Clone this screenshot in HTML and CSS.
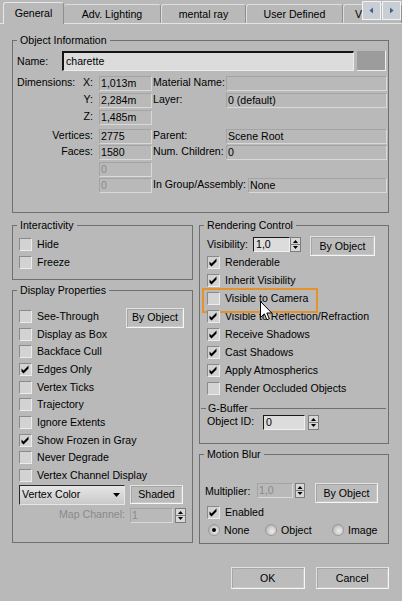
FILE: index.html
```html
<!DOCTYPE html>
<html>
<head>
<meta charset="utf-8">
<link rel="stylesheet" href="styles.css">
</head>
<body>
<div class="dialog">
  <div class="tabbar">
    <div class="tab active t-gen">General</div>
    <div class="tab t-adv">Adv. Lighting</div>
    <div class="tab t-mr">mental ray</div>
    <div class="tab t-ud">User Defined</div>
    <div class="tab t-v">V</div>
    <div class="tabscroll">
      <span class="sbtn"><svg width="5" height="7" viewBox="0 0 5 7"><path d="M4 0.5V6.5L0.5 3.5Z" fill="#3f5f93"/></svg></span>
      <span class="sbtn"><svg width="5" height="7" viewBox="0 0 5 7"><path d="M1 0.5V6.5L4.5 3.5Z" fill="#3f5f93"/></svg></span>
    </div>
  </div>

  <div class="page">
    <fieldset class="grp objinfo">
      <legend>Object Information</legend>
      <div class="namerow">
        <span class="name-lbl">Name:</span>
        <div class="edit name-edit">charette</div>
        <div class="swatch"></div>
      </div>
      <div class="infogrid">
        <div class="c1 split"><span>Dimensions:</span><span>X:</span></div>
        <div class="field">1,013m</div>
        <div class="c3">Material Name:</div>
        <div class="field wide"></div>

        <div class="c1">Y:</div>
        <div class="field">2,284m</div>
        <div class="c3">Layer:</div>
        <div class="field wide">0 (default)</div>

        <div class="c1">Z:</div>
        <div class="field">1,485m</div>
        <div class="c3"></div>
        <div></div>

        <div class="c1">Vertices:</div>
        <div class="field">2775</div>
        <div class="c3">Parent:</div>
        <div class="field wide">Scene Root</div>

        <div class="c1">Faces:</div>
        <div class="field">1580</div>
        <div class="c3">Num. Children:</div>
        <div class="field wide">0</div>

        <div class="c1"></div>
        <div class="field dis">0</div>
        <div class="c3"></div>
        <div></div>

        <div class="c1"></div>
        <div class="field dis">0</div>
        <div class="grp-asm"><span>In Group/Assembly:</span><div class="field asm">None</div></div>
      </div>
    </fieldset>

    <div class="cols">
      <div class="col">
        <fieldset class="grp interact">
          <legend>Interactivity</legend>
          <div class="chklist left">
            <div class="chk"><span class="box"></span><span>Hide</span></div>
            <div class="chk"><span class="box"></span><span>Freeze</span></div>
          </div>
        </fieldset>

        <fieldset class="grp display">
          <legend>Display Properties</legend>
          <div class="dispgrid">
            <div class="chk"><span class="box"></span><span>See-Through</span></div>
            <button class="btn byobj-d">By Object</button>
            <div class="chk"><span class="box"></span><span>Display as Box</span></div>
            <div class="chk"><span class="box"></span><span>Backface Cull</span></div>
            <div class="chk"><span class="box"><svg class="tick" width="11" height="11" viewBox="0 0 11 11"><path d="M1.5 4.5L3.5 6.5L8.5 1.5V4.5L3.5 9.5L1.5 7.5Z"/></svg></span><span>Edges Only</span></div>
            <div class="chk"><span class="box"></span><span>Vertex Ticks</span></div>
            <div class="chk"><span class="box"></span><span>Trajectory</span></div>
            <div class="chk"><span class="box"></span><span>Ignore Extents</span></div>
            <div class="chk"><span class="box"><svg class="tick" width="11" height="11" viewBox="0 0 11 11"><path d="M1.5 4.5L3.5 6.5L8.5 1.5V4.5L3.5 9.5L1.5 7.5Z"/></svg></span><span>Show Frozen in Gray</span></div>
            <div class="chk"><span class="box"></span><span>Never Degrade</span></div>
            <div class="chk"><span class="box"></span><span>Vertex Channel Display</span></div>
          </div>
          <div class="dd-row">
            <div class="dropdown"><span>Vertex Color</span><svg width="7" height="4" viewBox="0 0 7 4"><path d="M0 0H7L3.5 4Z"/></svg></div>
            <button class="btn shaded">Shaded</button>
          </div>
          <div class="mc-row">
            <span class="mc-lbl">Map Channel:</span>
            <div class="field mc dis">1</div>
            <svg class="spin" width="11" height="15" viewBox="0 0 11 15"><rect x="0.5" y="0.5" width="10" height="14" fill="#d8d8d8" stroke="#7c7c7c"/><path d="M0.5 7.5H10.5" stroke="#7c7c7c"/><path d="M3 6H8L5.5 3Z"/><path d="M3 9H8L5.5 12Z"/></svg>
          </div>
        </fieldset>
      </div>

      <div class="col">
        <fieldset class="grp render">
          <legend>Rendering Control</legend>
          <div class="vis-row">
            <span class="vis-lbl">Visibility:</span>
            <div class="edit vis-edit">1,0</div>
            <svg class="spin" width="11" height="15" viewBox="0 0 11 15"><rect x="0.5" y="0.5" width="10" height="14" fill="#d8d8d8" stroke="#7c7c7c"/><path d="M0.5 7.5H10.5" stroke="#7c7c7c"/><path d="M3 6H8L5.5 3Z"/><path d="M3 9H8L5.5 12Z"/></svg>
            <button class="btn byobj-r">By Object</button>
          </div>
          <div class="chklist right">
            <div class="chk"><span class="box"><svg class="tick" width="11" height="11" viewBox="0 0 11 11"><path d="M1.5 4.5L3.5 6.5L8.5 1.5V4.5L3.5 9.5L1.5 7.5Z"/></svg></span><span>Renderable</span></div>
            <div class="chk"><span class="box"><svg class="tick" width="11" height="11" viewBox="0 0 11 11"><path d="M1.5 4.5L3.5 6.5L8.5 1.5V4.5L3.5 9.5L1.5 7.5Z"/></svg></span><span>Inherit Visibility</span></div>
            <div class="chk hl"><span class="box"></span><span>Visible to Camera</span></div>
            <div class="chk"><span class="box"><svg class="tick" width="11" height="11" viewBox="0 0 11 11"><path d="M1.5 4.5L3.5 6.5L8.5 1.5V4.5L3.5 9.5L1.5 7.5Z"/></svg></span><span>Visible to Reflection/Refraction</span></div>
            <div class="chk"><span class="box"><svg class="tick" width="11" height="11" viewBox="0 0 11 11"><path d="M1.5 4.5L3.5 6.5L8.5 1.5V4.5L3.5 9.5L1.5 7.5Z"/></svg></span><span>Receive Shadows</span></div>
            <div class="chk"><span class="box"><svg class="tick" width="11" height="11" viewBox="0 0 11 11"><path d="M1.5 4.5L3.5 6.5L8.5 1.5V4.5L3.5 9.5L1.5 7.5Z"/></svg></span><span>Cast Shadows</span></div>
            <div class="chk"><span class="box"><svg class="tick" width="11" height="11" viewBox="0 0 11 11"><path d="M1.5 4.5L3.5 6.5L8.5 1.5V4.5L3.5 9.5L1.5 7.5Z"/></svg></span><span>Apply Atmospherics</span></div>
            <div class="chk"><span class="box"></span><span>Render Occluded Objects</span></div>
          </div>
          <fieldset class="gbuf">
            <legend>G-Buffer</legend>
            <div class="oid-row">
              <span class="oid-lbl">Object ID:</span>
              <div class="edit oid-edit">0</div>
              <svg class="spin" width="11" height="15" viewBox="0 0 11 15"><rect x="0.5" y="0.5" width="10" height="14" fill="#d8d8d8" stroke="#7c7c7c"/><path d="M0.5 7.5H10.5" stroke="#7c7c7c"/><path d="M3 6H8L5.5 3Z"/><path d="M3 9H8L5.5 12Z"/></svg>
            </div>
          </fieldset>
        </fieldset>

        <fieldset class="grp motion">
          <legend>Motion Blur</legend>
          <div class="mult-row">
            <span class="mult-lbl">Multiplier:</span>
            <div class="field mult dis">1,0</div>
            <svg class="spin" width="10" height="15" viewBox="0 0 10 15"><rect x="0.5" y="0.5" width="9" height="14" fill="#d8d8d8" stroke="#7c7c7c"/><path d="M0.5 7.5H9.5" stroke="#7c7c7c"/><path d="M2.5 6H7.5L5 3Z"/><path d="M2.5 9H7.5L5 12Z"/></svg>
            <button class="btn byobj-m">By Object</button>
          </div>
          <div class="chk en"><span class="box"><svg class="tick" width="11" height="11" viewBox="0 0 11 11"><path d="M1.5 4.5L3.5 6.5L8.5 1.5V4.5L3.5 9.5L1.5 7.5Z"/></svg></span><span>Enabled</span></div>
          <div class="radio-row">
            <div class="ritem r1"><span class="radio on"></span><span>None</span></div>
            <div class="ritem r2"><span class="radio"></span><span>Object</span></div>
            <div class="ritem r3"><span class="radio"></span><span>Image</span></div>
          </div>
        </fieldset>
      </div>
    </div>

    <div class="okrow">
      <button class="btn dlg">OK</button>
      <button class="btn dlg">Cancel</button>
    </div>
  </div>

  <svg class="cursor" width="13" height="20" viewBox="0 0 13 20"><path d="M0.5 0.5V16.5L4.3 12.8L6.9 18.8L9.3 17.8L6.8 12H11.8Z" fill="#fff" stroke="#000" stroke-linejoin="miter"/></svg>
</div>
</body>
</html>
```

FILE: styles.css
```css
* { box-sizing: border-box; }
html, body { margin: 0; padding: 0; }
body {
  background: #b9b9b9;
  font-family: "Liberation Sans", Arial, sans-serif;
  font-size: 10.6px;
  line-height: 13px;
  color: #000;
  width: 402px;
  height: 601px;
  overflow: hidden;
}
.dialog { position: relative; width: 402px; height: 601px; overflow: hidden; }

/* ---------- tabs ---------- */
.tabbar {
  position: relative;
  display: flex;
  align-items: flex-end;
  height: 24px;
  padding-left: 3px;
  border-bottom: 1px solid #e4e4e4;
}
.tab {
  height: 19px;
  display: flex;
  align-items: center;
  justify-content: center;
  flex: none;
  background: #b9b9b9;
  border-top: 1px solid #dedede;
  border-left: 1px solid #dedede;
  border-right: 1px solid #8f8f8f;
  border-radius: 3px 3px 0 0;
  white-space: nowrap;
  padding-top: 1px;
}
.tab.active {
  height: 22px;
  margin-bottom: -1px;
  position: relative;
  z-index: 1;
  border-top-color: #e8e8e8;
  border-left-color: #e8e8e8;
  padding-bottom: 1px;
}
.t-gen { width: 61px; }
.t-adv { width: 97px; border-left: none; }
.t-mr { width: 85px; }
.t-ud { width: 97px; }
.t-v { flex: 1; justify-content: flex-start; padding-left: 11px; }

.tabscroll {
  position: absolute;
  left: 362px;
  top: 1px;
  display: flex;
  gap: 1px;
  z-index: 2;
}
.sbtn {
  width: 19px;
  height: 19px;
  display: flex;
  align-items: center;
  justify-content: center;
  background: #c9cdd4;
  border: 1px solid #f2f2f2;
}

/* ---------- page ---------- */
.page { padding: 10px 13px 0 12px; }

fieldset.grp {
  margin: 0;
  padding: 0;
  border: 1px solid #6f6f6f;
  min-width: 0;
}
fieldset.grp > legend {
  margin-left: 4px;
  padding: 0 3px;
  line-height: 13px;
  height: 13px;
}

/* object information */
.objinfo { padding-bottom: 19px !important; }
.namerow {
  display: flex;
  align-items: center;
  height: 20px;
  margin-top: 4px;
  padding-left: 4px;
}
.name-lbl { width: 45px; }
.edit {
  height: 15px;
  background: #dcdcdc;
  border-style: solid;
  border-width: 1px;
  border-color: #1a1a1a #f0f0f0 #f0f0f0 #1a1a1a;
  padding-left: 2px;
  line-height: 13px;
  white-space: nowrap;
  overflow: hidden;
}
.name-edit {
  width: 292px;
  height: 20px;
  line-height: 17px;
  border-width: 2px 1px 1px 2px;
  border-color: #141414 #ececec #ececec #141414;
  padding-left: 2px;
}
.swatch {
  width: 29px;
  height: 20px;
  margin-left: 3px;
  background: #9c9c9c;
  border-right: 1px solid #efefef;
  border-bottom: 1px solid #efefef;
}

.infogrid {
  display: grid;
  margin-top: 5px;
  grid-template-columns: 86px 54px 73px 161px;
  grid-template-rows: 17px 17px 19px 16px 17px 16px 15px;
}
.c1 {
  height: 15px;
  text-align: right;
  padding-right: 6px;
  white-space: nowrap;
}
.c1.split {
  display: flex;
  justify-content: space-between;
  padding-left: 4px;
}
.c3 { height: 15px; white-space: nowrap; }
.field {
  width: 53px;
  height: 15px;
  border-style: solid;
  border-width: 1px;
  border-color: #a4a4a4 #d9d9d9 #d9d9d9 #a4a4a4;
  padding-left: 1px;
  line-height: 13px;
  white-space: nowrap;
  overflow: hidden;
}
.field.wide { width: 161px; }
.dis { color: #8a8a8a; }
.grp-asm {
  grid-column: 3 / span 2;
  display: flex;
  white-space: nowrap;
}
.grp-asm > span { width: 95px; }
.field.asm { width: 139px; }

/* columns */
.cols {
  display: grid;
  grid-template-columns: 181px 190px;
  column-gap: 6px;
  margin-top: 6px;
  align-items: start;
}
.col { display: flex; flex-direction: column; min-width: 0; }

.chk {
  display: flex;
  align-items: center;
  height: 18px;
  white-space: nowrap;
}
.box {
  width: 13px;
  height: 13px;
  flex: none;
  margin-right: 5px;
  background: #d3d3d3;
  border-style: solid;
  border-width: 1px;
  border-color: #8a8a8a #ececec #ececec #8a8a8a;
  position: relative;
}
.tick { display: block; }
.tick path { fill: #000; }

.interact { padding-bottom: 7.5px !important; }
.chklist.left { margin-top: 3.5px; padding-left: 6px; }

.display { margin-top: 4px !important; padding-bottom: 19px !important; }
.dispgrid {
  display: grid;
  grid-template-columns: minmax(0, 1fr) 58px;
  grid-auto-rows: 17.7px;
  padding-right: 8px;
  padding-left: 6px;
  margin-top: 10.65px;
}
.dispgrid .chk { grid-column: 1; height: 17.7px; overflow: visible; }
.byobj-d { grid-column: 2; grid-row: 1; width: 58px; height: 20px; align-self: start; }

.btn {
  font-family: inherit;
  font-size: inherit;
  color: #000;
  background: #bcbcbc;
  border-style: solid;
  border-width: 1px;
  border-color: #e2e2e2 #f6f6f6 #f6f6f6 #e2e2e2;
  box-shadow: inset 1px 1px 0 #a6a6a6, inset -1px -1px 0 #c9c9c9;
  padding: 0;
  margin: 0;
  line-height: 13px;
  white-space: nowrap;
}

.dd-row {
  display: flex;
  padding-left: 6px;
  height: 20px;
}
.dropdown {
  width: 106px;
  height: 20px;
  display: flex;
  align-items: center;
  justify-content: space-between;
  padding: 0 4px 0 2px;
  border-style: solid;
  border-width: 1px;
  border-color: #2a2a2a #e6e6e6 #e6e6e6 #2a2a2a;
  background: linear-gradient(#e6e6e6, #c9c9c9);
}
.dropdown svg path { fill: #000; }
.shaded { width: 53px; height: 19px; margin-left: 5px; }

.mc-row {
  display: flex;
  margin-top: 3px;
  height: 15px;
  padding-left: 6px;
}
.mc-lbl { width: 106px; text-align: right; color: #8a8a8a; }
.field.mc { width: 43px; margin-left: 5px; }
.spin { display: block; flex: none; }
.mc-row .spin { margin-left: 2px; }

/* right column */
.render { padding-bottom: 13px !important; }
.vis-row {
  display: flex;
  align-items: flex-start;
  height: 17.5px;
  margin-top: 4px;
}
.vis-lbl { width: 53px; padding-left: 7px; margin-top: 2px; }
.vis-edit { width: 37px; margin-top: 1px; }
.vis-row .spin { margin-top: 1px; }
.byobj-r { width: 65px; height: 20px; margin-left: 9px; }

.chklist.right { padding-left: 7px; }
.chk.hl { position: relative; }
.chk.hl::after {
  content: "";
  position: absolute;
  left: -5px;
  top: -1.5px;
  width: 112px;
  height: 21px;
  border: 2px solid #e3922c;
}

fieldset.gbuf {
  margin: 4.5px 2px 0 1px;
  padding: 0;
  border: 0;
  border-top: 1px solid #6f6f6f;
  min-width: 0;
}
fieldset.gbuf > legend {
  margin-left: 5px;
  padding: 0 2px;
  line-height: 13px;
  height: 13px;
}
.oid-row { display: flex; height: 15px; }
.oid-lbl { width: 62px; padding-left: 6px; }
.oid-edit { width: 42px; }
.oid-row .spin { margin-left: 3px; }

.motion { margin-top: 4px !important; padding-bottom: 4px !important; }
.mult-row {
  display: flex;
  align-items: flex-start;
  height: 20px;
  margin-top: 22px;
}
.mult-lbl { width: 57px; padding-left: 5px; margin-top: 2px; }
.field.mult { width: 36px; }
.mult-row .spin { margin-left: 2px; }
.byobj-m { width: 63px; height: 20px; margin-left: 10px; }

.chk.en { padding-left: 7px; }
.radio-row { display: flex; height: 18px; padding-left: 8px; }
.ritem { display: flex; align-items: center; white-space: nowrap; }
.r1 { width: 57px; }
.r2 { width: 67px; }
.radio {
  width: 12px;
  height: 12px;
  border-radius: 50%;
  margin-right: 4px;
  flex: none;
  background: radial-gradient(circle at 60% 60%, #ececec 0, #d0d0d0 45%, #9a9a9a 100%);
  border: 1px solid #9a9a9a;
  position: relative;
}
.radio.on::after {
  content: "";
  position: absolute;
  left: 3px;
  top: 3px;
  width: 4px;
  height: 4px;
  border-radius: 50%;
  background: #000;
}

.okrow {
  display: flex;
  gap: 11px;
  margin-top: 23px;
  padding-left: 219px;
}
.btn.dlg { width: 75px; height: 22px; }

.cursor {
  position: absolute;
  left: 260px;
  top: 301px;
  z-index: 5;
}
```
